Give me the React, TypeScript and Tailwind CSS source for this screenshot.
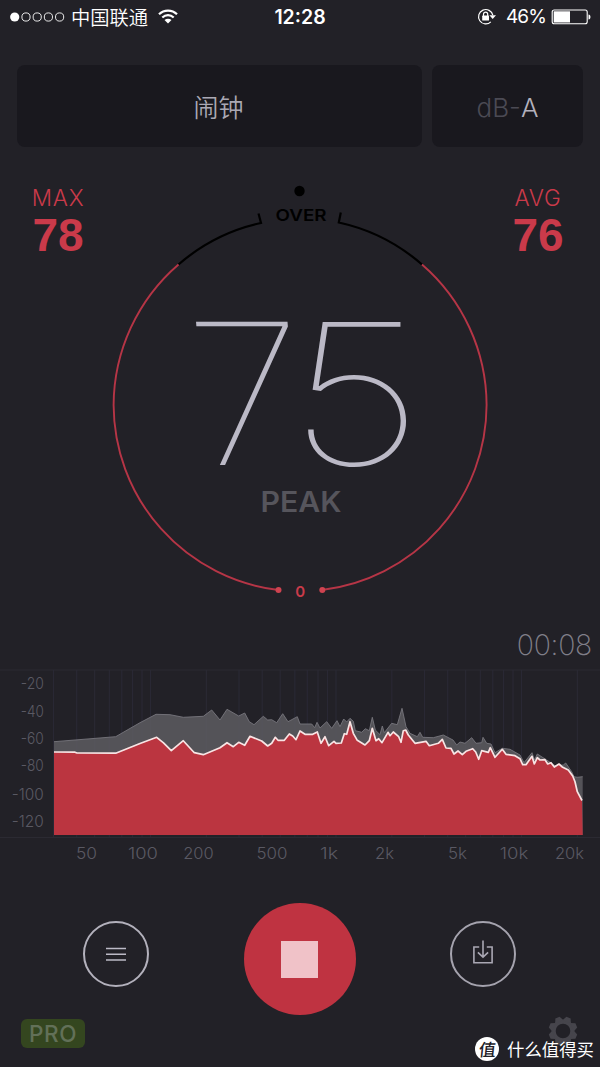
const LEVEL =
  "54,752 75,752.2 77,753 115.7,753.2 140,743.5 156.7,737.3 163.5,742.8 171.3,750.7 183.3,740.7 194.3,752.7 203.3,754.7 220,747.7 227,742.7 233.3,746.7 238.7,742.3 244.7,745.3 250,736.3 261.7,741 267.7,746 271.7,743.3 275.3,737.3 278,740.3 284.3,740.3 289.3,734 292.7,736 296,739.7 300,731 305,734.3 312.7,734.3 317.3,732 321,743.3 325,736.7 328.7,745.7 334,741.3 336,743.3 341.3,743 344.3,733.7 346.7,734.3 350,721.7 353.3,733.3 357.3,740.3 365,745 369.3,740.7 372.3,728.3 376,740.7 378.7,738.7 382,742.7 388,732.3 390,735.7 393.3,732 398.7,736.7 401,742.3 403.3,730.7 405.7,730 408.3,735 415,743.3 426,741.3 429.3,745.7 438.3,743.3 442.3,739.3 446,748 451,748.3 454,754 458,751 462.3,754.7 466,751.3 472.7,748.7 475.7,752 478.7,759.3 481.7,750.7 488.3,752.3 490.3,747.7 495,757.3 502.3,749.3 506,754.3 515,755.7 520,758.7 522.7,764.7 526,764.7 532,756.3 534.3,764 537.3,757.7 540,760 545,759.7 547.7,764 551,762.7 554.3,767 559,764 562.7,767.3 568.3,770 572.7,776 575,781.7 577.3,791.7 582,800.5";

const PEAKS =
  "54,741.7 115.7,736.7 140,722.7 156,714.3 170,714.7 183.3,717.3 203.3,716.3 211.7,710 220,720 227,709.3 238.7,716 244.7,713 249.3,721.7 254,724.7 263.3,716.3 267.7,720 271.7,719.7 276.7,722.7 282.7,713.7 288,721.7 297.3,716.7 300,724 311.7,724 314.7,727.7 317,722.3 320,728 326.7,721.7 331.7,728.3 337,720.7 340,726.7 343.7,719 346.7,722 350,718.3 353.3,721.3 355.3,730.7 361.7,732.3 365.3,728.7 369.3,730.7 372.3,717.3 375.3,730 380,734.7 382.3,726 384.3,732.7 391.7,723.3 397.3,724.7 402,708.3 406,726.7 410,733.3 417.3,736.7 420,732.3 422.7,737.3 433.3,737.7 443.3,735 450,738.5 453,740 456.7,745 460,742 465,743.3 471.7,737.7 476,743.3 481.7,742.7 483,737.3 486.7,743.3 491,744 495,752.7 502.3,748.3 510,749.3 520,755 524,762.7 532,752.7 534.5,760 537.3,754 546.7,760 555,765.7 563.3,765 565.7,763 571.7,771.7 574,776.7 577.3,777.3 582.7,776.7";

const FREQS = [
  30, 40, 50, 60, 70, 80, 90, 100, 200, 300, 400, 500, 600, 700, 800, 900, 1000,
  2000, 3000, 4000, 5000, 6000, 7000, 8000, 9000, 10000, 20000,
];
const freqX = (f: number) => 150.5 + 185.5 * Math.log10(f / 100);

const DB_LABELS = [
  { t: "-20", y: 689.3, w: 23 },
  { t: "-40", y: 716.7, w: 23 },
  { t: "-60", y: 743.7, w: 23 },
  { t: "-80", y: 771, w: 23 },
  { t: "-100", y: 799.7, w: 32 },
  { t: "-120", y: 827, w: 32 },
];
const HZ_LABELS = [
  { t: "50", x: 86.5, w: 21 },
  { t: "100", x: 143, w: 30 },
  { t: "200", x: 198.5, w: 30.5 },
  { t: "500", x: 272, w: 31 },
  { t: "1k", x: 329, w: 18 },
  { t: "2k", x: 384.5, w: 19 },
  { t: "5k", x: 457.5, w: 19 },
  { t: "10k", x: 514, w: 28.5 },
  { t: "20k", x: 569.5, w: 29 },
];

function StatusBar() {
  return (
    <header className="grid h-8 grid-cols-[1fr_auto_1fr] items-center text-white">
      <div className="flex items-center pl-[10px]">
        <svg width="56" height="12" viewBox="0 0 56 12" fill="none" stroke="#fff">
          <circle cx="4.7" cy="6" r="4.6" fill="#fff" stroke="none" />
          {[16, 27.2, 38.4, 49.6].map((x) => (
            <circle key={x} cx={x} cy="6" r="4.1" strokeWidth="0.9" />
          ))}
        </svg>
        <span className="ml-[5px] pt-px font-['Noto_Sans_CJK_SC',sans-serif] text-[19.3px] leading-8 font-[350]">中国联通</span>
        <svg className="ml-[10px]" width="20" height="15" viewBox="0 0 20 15" fill="none" stroke="#fff" strokeWidth="2.2">
          <path d="M1 5.2C6 0.3 14 0.3 19 5.2" />
          <path d="M4.3 8.5C7.6 5.4 12.4 5.4 15.7 8.5" />
          <path d="M10 14.4L6.5 11C8.5 9.3 11.5 9.3 13.5 11Z" fill="#fff" stroke="none" />
        </svg>
      </div>
      <span className="pt-0.5 font-['Inter',sans-serif] text-[19.5px] font-semibold">12:28</span>
      <div className="flex items-center justify-end pr-[9px]">
        <svg width="20" height="18" viewBox="0 0 20 18" fill="none" stroke="#fff" strokeWidth="1.2">
          <path d="M13.8 13.9A7.2 7.2 0 1 1 15.8 7.2" />
          <path d="M12.4 7.3H19L15.7 11Z" fill="#fff" stroke="none" />
          <rect x="5.2" y="7.6" width="6.8" height="5" rx="0.6" fill="#fff" stroke="none" />
          <path d="M6.5 8V6.2a2.1 2.1 0 0 1 4.2 0V8" />
        </svg>
        <span className="ml-[9px] pt-0.5 font-['Inter',sans-serif] text-[19px] tracking-[-0.9px]">46%</span>
        <svg className="ml-[5px]" width="40" height="16" viewBox="0 0 40 16">
          <rect x="1.2" y="1" width="35" height="13.8" rx="2" fill="none" stroke="#fff" strokeWidth="1.1" />
          <rect x="2.7" y="2.3" width="16.3" height="11.2" fill="#fff" />
          <path d="M37.5 5.5c2.6 0 2.6 5 0 5z" fill="#fff" />
        </svg>
      </div>
    </header>
  );
}

function Stat({ label, value }: { label: string; value: string }) {
  return (
    <div className="flex w-[116px] flex-col items-center pt-1 text-[#ca3a4a]">
      <span className="font-['Inter',sans-serif] text-[22.5px] leading-7 font-light tracking-[0.8px]">{label}</span>
      <span className="-mt-px font-['Liberation_Sans',sans-serif] text-[46px] leading-[48px] font-bold">{value}</span>
    </div>
  );
}

function Gauge() {
  return (
    <svg width="368" height="430" viewBox="116 180 368 430" fill="none" className="overflow-visible">
      <circle cx="299.5" cy="191" r="5.2" fill="#000" />
      <g stroke="#000" strokeWidth="2.2">
        <path d="M258.5 213.5L261 223A187 187 0 0 0 178.5 264.5" />
        <path d="M340.8 212.5L338.8 222.5A187 187 0 0 1 422 264.5" />
      </g>
      <g stroke="#b63546" strokeWidth="1.9">
        <path d="M178.5 264.5A187 187 0 0 0 113.6 405A187 187 0 0 0 278.5 590" />
        <path d="M422 264.5A187 187 0 0 1 486.6 405A187 187 0 0 1 322 590" />
      </g>
      <circle cx="278.5" cy="590" r="3" fill="#cf4350" />
      <circle cx="322.3" cy="590" r="3" fill="#cf4350" />
      <g fontFamily="Inter, sans-serif" textAnchor="middle">
        <text x="301" y="220.7" fontSize="16.5" fontWeight="600" fill="#000" textLength="51" lengthAdjust="spacingAndGlyphs">OVER</text>
        <text x="300.3" y="597.3" fontSize="15" fontWeight="600" fill="#c93b4a">0</text>
        <text x="301" y="512" fontSize="28" fontWeight="600" fill="#56555c" textLength="81" lengthAdjust="spacingAndGlyphs">PEAK</text>
      </g>
      <g fontFamily="Inter, sans-serif" fontSize="197" fontWeight="100" fill="#bbb9c6">
        <text transform="translate(194.9 464.5) skewX(5) scale(1.1 1)">7</text>
        <text transform="translate(288 464.5) scale(1.22 1)">5</text>
      </g>
    </svg>
  );
}

function Spectrum() {
  return (
    <svg width="600" height="204" viewBox="0 664 600 204" fill="none">
      <g stroke="#2d2c3a" strokeWidth="1.2" opacity="0.7">
        {FREQS.map((f) => (
          <path key={f} d={`M${freqX(f)} 670V837`} />
        ))}
      </g>
      <path d={`M54 835L${PEAKS}L582.7 835Z`} fill="#5b5a60" opacity="0.88" />
      <path d="M0 670H600M0 837.5H600" stroke="#2b2a32" />
      <polyline points={PEAKS} stroke="#77767d" strokeWidth="0.9" />
      <path d={`M54 835L${LEVEL}L582.7 835Z`} fill="#bb3540" />
      <polyline points={LEVEL} stroke="#f8e4e4" strokeWidth="1.7" strokeLinejoin="round" />
      <g fontFamily="Inter, sans-serif" fontSize="16.3" fontWeight="300" fill="#5a5963">
        {DB_LABELS.map((l) => (
          <text key={l.t} x={43.8 - l.w} y={l.y} textLength={l.w} lengthAdjust="spacingAndGlyphs">{l.t}</text>
        ))}
        {HZ_LABELS.map((l) => (
          <text key={l.t} x={l.x - l.w / 2} y="858.7" textLength={l.w} lengthAdjust="spacingAndGlyphs">{l.t}</text>
        ))}
      </g>
    </svg>
  );
}

function Controls() {
  return (
    <div className="flex justify-between pt-[35px] pr-[84px] pl-[83px]">
      <button className="mt-[18px] flex size-[66px] items-center justify-center rounded-full border-2 border-[#b3b1bc]">
        <svg width="20" height="14" viewBox="0 0 20 14" stroke="#bcbac6" strokeWidth="1.5">
          <path d="M0 1.4H20M0 7.2H20M0 13H20" />
        </svg>
      </button>
      <button className="flex size-28 items-center justify-center rounded-full bg-[#bf3341]">
        <span className="size-[37px] bg-[#f0c2c8]" />
      </button>
      <button className="mt-[18px] flex size-[66px] items-center justify-center rounded-full border-2 border-[#a5a3ae]">
        <svg className="-mt-1" width="20" height="24" viewBox="0 0 20 24" fill="none" stroke="#aaa8b4" strokeWidth="1.6">
          <path d="M6.2 7H0.9V22.8H19.1V7H13.8" />
          <path d="M10 0.5V17M4.9 12.3L10 17.2L15.1 12.3" />
        </svg>
      </button>
    </div>
  );
}

function Gear() {
  return (
    <svg width="30" height="30" viewBox="-15 -15 30 30">
      <circle r="9.3" fill="none" stroke="#46454c" strokeWidth="4" />
      <g fill="#46454c">
        {[22.5, 67.5, 112.5, 157.5, 202.5, 247.5, 292.5, 337.5].map((a) => (
          <path key={a} d="M-4.4 -10L-2.3 -14.4H2.3L4.4 -10Z" transform={`rotate(${a})`} />
        ))}
      </g>
    </svg>
  );
}

export default function App() {
  return (
    <div className="relative flex h-[1067px] w-[600px] flex-col overflow-hidden bg-[#222127]">
      <StatusBar />
      <div className="mt-[33px] flex h-[82px] shrink-0 gap-[10px] px-[17px] font-['Inter','Noto_Sans_CJK_SC',sans-serif]">
        <div className="flex w-[405px] items-center justify-center rounded-lg bg-[#19181e] pt-[5px] pr-0.5 text-[25px] font-[350] text-[#aaa8b4]">
          闹钟
        </div>
        <div className="flex flex-1 items-center justify-center rounded-lg bg-[#19181e] pt-0.5 text-[26px] font-light text-[#4b4a54]">
          dB-<span className="text-[#b3b1bd]">A</span>
        </div>
      </div>
      <main className="mt-[33px] flex h-[430px] shrink-0">
        <Stat label="MAX" value="78" />
        <Gauge />
        <div className="-ml-1 flex">
          <Stat label="AVG" value="76" />
        </div>
      </main>
      <div className="flex h-[54px] shrink-0 items-center justify-end pt-4 pr-2 font-['Inter',sans-serif] text-[28.5px] font-extralight tracking-[-0.3px] text-[#807f89]">
        00:08
      </div>
      <Spectrum />
      <Controls />
      <footer className="mt-[1px] flex items-start justify-between pr-[22px] pl-[21px]">
        <span className="mt-[3px] flex h-[29px] w-16 items-center justify-center rounded-md bg-[#34461f] pt-px font-['Inter',sans-serif] text-[22.5px] font-medium tracking-[0.6px] text-[#627058]">
          PRO
        </span>
        <Gear />
      </footer>
      <div className="absolute top-[1036px] left-[475px] flex items-center font-['Noto_Sans_CJK_SC',sans-serif] text-white">
        <span className="flex size-6 items-center justify-center rounded-full bg-white text-[17px] leading-6 font-medium text-[#222127]">
          <span className="-skew-x-6">值</span>
        </span>
        <span className="ml-2 pt-px text-[17.4px] leading-6 whitespace-nowrap">什么值得买</span>
      </div>
    </div>
  );
}
